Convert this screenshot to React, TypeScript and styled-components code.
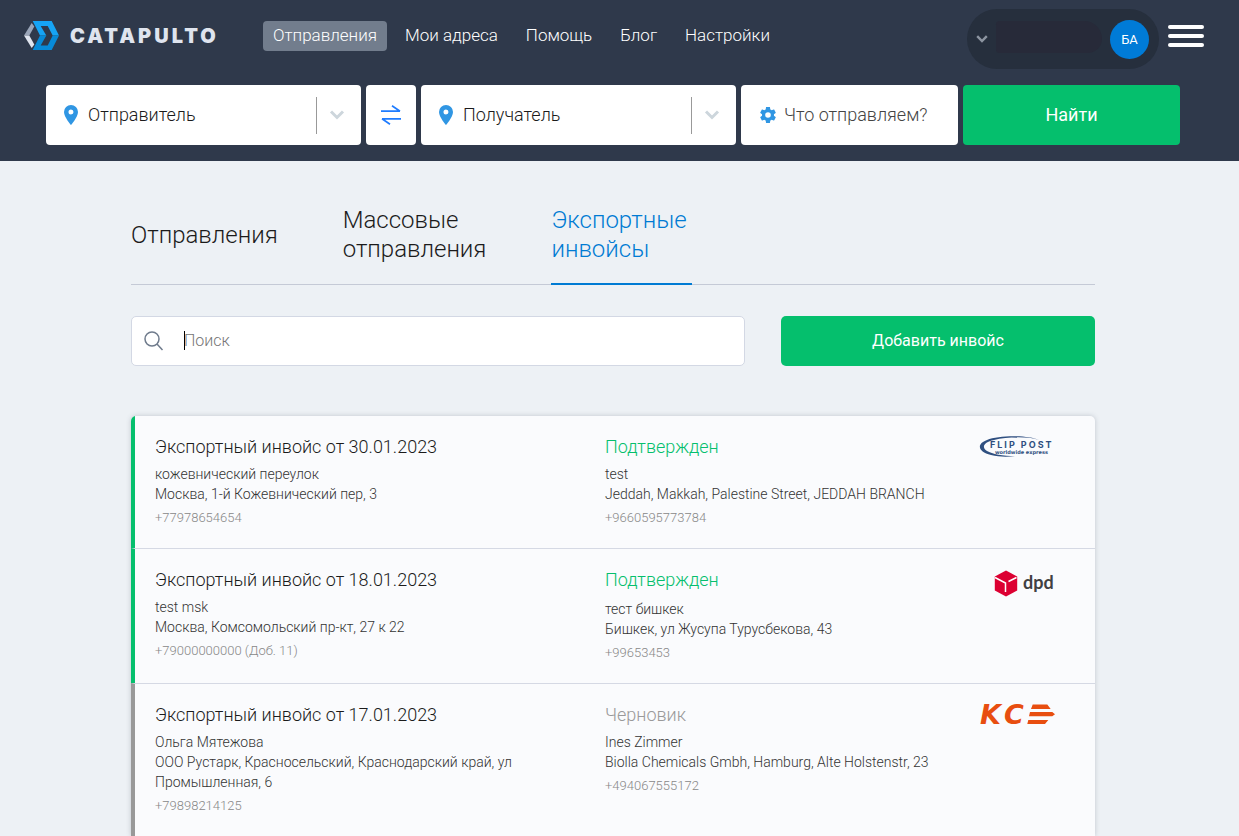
import React from 'react';
import styled, { createGlobalStyle } from 'styled-components';

const GlobalStyle = createGlobalStyle`
  *, *::before, *::after { box-sizing: border-box; }
  body {
    margin: 0;
    background: #edf1f5;
    color: #1b1b1b;
    font-family: Roboto, "Open Sans", sans-serif;
    font-weight: 300;
  }
  button, input { font: inherit; color: inherit; }
  button { border: 0; padding: 0; background: none; cursor: pointer; }
  a { color: inherit; text-decoration: none; }
  h2, p { margin: 0; font-weight: inherit; }
  svg { display: block; flex: none; overflow: visible; }
`;

/* ---------- header ---------- */

const Header = styled.header`
  background: #2f394b;
  padding: 9px 13px 16px 0;
`;

const TopBar = styled.div`
  display: flex;
  align-items: flex-start;
  padding: 0 22px 0 23px;
`;

const Brand = styled.a`
  display: flex;
  align-items: center;
  gap: 10px;
  width: 240px;
  height: 52px;
`;

const BrandName = styled.span`
  padding-top: 2px;
  color: #dfe4ee;
  font: 900 20px/24px Inter, sans-serif;
  letter-spacing: 3px;
`;

const Nav = styled.nav`
  display: flex;
  gap: 8px;
  padding-top: 12px;
  flex: 1;
`;

const NavLink = styled.a<{ $active?: boolean }>`
  padding: 0 10px 2px;
  border-radius: 4px;
  background: ${({ $active }) => ($active ? '#727d8d' : 'transparent')};
  color: #fff;
  font-size: 17px;
  line-height: 28px;
  white-space: nowrap;
`;

const Account = styled.button`
  display: flex;
  align-items: center;
  justify-content: space-between;
  width: 192px;
  height: 60px;
  padding: 0 10px 0 9px;
  border-radius: 30px;
  background: #262f3d;
`;

const AccountName = styled.span`
  width: 106px;
  height: 32px;
  margin-bottom: 4px;
  border-radius: 10px 50px 40px 10px;
  background: #272a39;
`;

const Avatar = styled.span`
  width: 39px;
  height: 39px;
  border-radius: 50%;
  background: #007bd7;
  color: #fff;
  font-size: 13px;
  font-weight: 400;
  line-height: 39px;
  text-align: center;
`;

const MenuButton = styled.button`
  display: flex;
  flex-direction: column;
  gap: 5px;
  width: 36px;
  margin: 16px 0 0 9px;
`;

const MenuLine = styled.span`
  height: 4px;
  border-radius: 2px;
  background: #fff;
`;

const SearchForm = styled.form`
  display: grid;
  grid-template-columns: 315fr 50px 315fr 217fr 217fr;
  gap: 5px;
  max-width: 1134px;
  margin: 16px auto 0;
  font-size: 18px;
`;

const Field = styled.label`
  display: flex;
  align-items: center;
  min-width: 0;
  height: 60px;
  padding: 0 17px 0 18px;
  border-radius: 4px;
  background: #fff;
`;

const FieldInput = styled.input`
  flex: 1;
  min-width: 0;
  margin-left: 10px;
  padding: 0 0 2px;
  border: 0;
  outline: 0;
  background: none;
  &::placeholder { color: #1b1b1b; opacity: 1; }
`;

const Divider = styled.span`
  width: 1px;
  height: 37px;
  margin-right: 13px;
  background: #999;
`;

const SwapButton = styled.button`
  display: grid;
  place-items: center;
  border-radius: 4px;
  background: #fff;
`;

const ParcelButton = styled.button`
  display: flex;
  align-items: center;
  gap: 8px;
  padding-left: 19px;
  border-radius: 4px;
  background: #fff;
  color: #444;
  white-space: nowrap;
`;

const ParcelLabel = styled.span`
  padding-bottom: 2px;
`;

const GreenButton = styled.button<{ $large?: boolean }>`
  height: ${({ $large }) => ($large ? 60 : 50)}px;
  padding-bottom: 2px;
  border-radius: ${({ $large }) => ($large ? 4 : 5)}px;
  background: #05bf6d;
  color: #fff;
  font-size: ${({ $large }) => ($large ? 18 : 16)}px;
  font-weight: 400;
`;

/* ---------- content ---------- */

const Content = styled.main`
  padding-right: 13px;
`;

const Column = styled.div`
  max-width: 964px;
  margin: 0 auto;
`;

const Tabs = styled.nav`
  display: flex;
  align-items: stretch;
  gap: 65px;
  padding-top: 45px;
  box-shadow: inset 0 -1px #c5cad6;
`;

const Tab = styled.a<{ $active?: boolean }>`
  display: flex;
  align-items: center;
  min-width: 141px;
  padding-bottom: 19px;
  border-bottom: 2px solid ${({ $active }) => ($active ? '#007bd3' : 'transparent')};
  color: ${({ $active }) => ($active ? '#007bd3' : 'inherit')};
  font-size: 24px;
  line-height: 29px;
`;

const Toolbar = styled.div`
  display: grid;
  grid-template-columns: 614fr 314fr;
  gap: 36px;
  margin: 31px 0 50px;
`;

const Filter = styled.label`
  display: flex;
  align-items: center;
  height: 50px;
  padding: 0 12px;
  border: 1px solid #d3d8e4;
  border-radius: 5px;
  background: #fff;
  font-size: 16px;
`;

const FilterBox = styled.span`
  position: relative;
  display: flex;
  flex: 1;
  margin-left: 20px;
`;

const FilterInput = styled.input`
  flex: 1;
  min-width: 0;
  padding: 0;
  border: 0;
  outline: 0;
  line-height: 20px;
  &::placeholder { color: #757575; opacity: 1; }
`;

const Caret = styled.span`
  position: absolute;
  top: 0;
  left: 0;
  width: 1px;
  height: 19px;
  background: #000;
`;

const List = styled.section`
  overflow: hidden;
  border-radius: 5px 5px 0 0;
  box-shadow: 0 0 5px rgba(60, 70, 90, 0.25);
  background: #fafbfd;
`;

const Row = styled.article<{ $accent: string }>`
  display: grid;
  grid-template-columns: 1fr 1fr;
  padding: 20px 40px 20px 20px;
  border-left: 4px solid ${({ $accent }) => $accent};
  & + & { border-top: 1px solid #d5d9e4; }
`;

const Party = styled.div`
  max-width: 400px;
`;

const Receiver = styled.div`
  display: flex;
  justify-content: space-between;
  align-items: flex-start;
`;

const Title = styled.h2<{ $color?: string; $gap?: number }>`
  margin-bottom: ${({ $gap = 6 }) => $gap}px;
  color: ${({ $color = '#1b1b1b' }) => $color};
  font-size: 18px;
  line-height: 22px;
`;

const Line = styled.p`
  color: #333;
  font-size: 14px;
  line-height: 20px;
`;

const Phone = styled.p`
  margin-top: 4px;
  color: #888;
  font-size: 13px;
  line-height: 20px;
`;

/* ---------- drawings ---------- */

const BrandMark = () => (
  <svg width="37" height="31" viewBox="0 0 37 31" aria-hidden="true">
    <path d="M8.700 3 11.300 6.500 6.300 15.500H1z" fill="#9aa5b8" />
    <path d="M1 15.500h5.300l5 9-2.600 3.500z" fill="#dfe4ee" />
    <path d="M9.700 1h19L36 15.500h-6.300L24.700 6h-7l5.600 9.500H17z" fill="#16a4f5" />
    <path d="M9.700 30h19L36 15.500h-6.300l-5 10h-7l5.600-10H17z" fill="#078ad8" />
  </svg>
);

const Pin = () => (
  <svg width="14" height="20" viewBox="0 0 14 20" aria-hidden="true">
    <path fillRule="evenodd" fill="#3096e3" d="M7 0a7 7 0 0 1 7 7c0 5-7 13-7 13S0 12 0 7a7 7 0 0 1 7-7zm0 4.500a2.500 2.500 0 1 0 0 5 2.500 2.500 0 0 0 0-5z" />
  </svg>
);

const Chevron = ({ color = '#cdd6dc', size = 14 }: { color?: string; size?: number }) => (
  <svg width={size} height={size - 4} viewBox="0 0 14 10" fill="none" aria-hidden="true">
    <path d="M1 1.500 7 7.500l6-6" stroke={color} strokeWidth="3" />
  </svg>
);

const Swap = () => (
  <svg width="20" height="20" viewBox="0 0 20 20" fill="none" stroke="#1f7cff" strokeWidth="1.700" aria-hidden="true">
    <path d="M0 6.200h19M11 .8l8 5.400M20 13.800H1M9 19.200l-8-5.400" />
  </svg>
);

const Gear = () => (
  <svg width="16" height="16" viewBox="2 2 20 20" aria-hidden="true">
    <path fill="#3096e3" d="M19.430 12.980c.04-.32.070-.64.070-.98s-.03-.66-.07-.98l2.110-1.650c.19-.15.240-.42.120-.64l-2-3.460c-.12-.22-.39-.3-.61-.22l-2.490 1c-.52-.4-1.080-.73-1.690-.98l-.38-2.650C14.460 2.180 14.250 2 14 2h-4c-.25 0-.46.180-.49.420l-.38 2.650c-.61.250-1.170.59-1.690.98l-2.490-1c-.23-.09-.49 0-.61.220l-2 3.460c-.13.220-.07.490.12.640l2.110 1.650c-.04.320-.07.650-.07.980s.03.660.07.980l-2.110 1.650c-.19.150-.24.420-.12.640l2 3.460c.12.220.39.300.61.220l2.490-1c.52.400 1.080.730 1.690.980l.38 2.650c.03.240.24.420.49.420h4c.25 0 .46-.18.490-.42l.38-2.650c.61-.25 1.170-.59 1.690-.98l2.490 1c.23.090.490 0 .610-.22l2-3.460c.12-.22.070-.49-.12-.64l-2.110-1.650zM12 15.500a3.500 3.500 0 1 1 0-7 3.500 3.500 0 0 1 0 7z" />
  </svg>
);

const Magnifier = () => (
  <svg width="20" height="20" viewBox="0 0 20 20" fill="none" stroke="#6f7b8c" strokeWidth="1.500" aria-hidden="true">
    <circle cx="8" cy="8" r="7" />
    <path d="m13 13 5.500 6" />
  </svg>
);

const FlipPost = () => (
  <svg width="76" height="22" viewBox="0 0 76 22" role="img" aria-label="Flip Post">
    <path d="M60 4C49-1 20-1 8 4-3 8-1 16 12 19c8 2 17 2 24 1-12 0-23-2-28-5C2 11 5 6 15 4 28 1 48 0 60 4z" fill="#2f4f80" />
    <text x="11" y="12" fill="#2f4f80" fontFamily="Inter" fontWeight="700" fontSize="9" letterSpacing="2">FLIP POST</text>
    <text x="16" y="18" fill="#2f4f80" fontFamily="DejaVu Sans" fontWeight="700" fontSize="5">worldwide express</text>
  </svg>
);

const Dpd = () => (
  <svg width="61" height="28" viewBox="0 0 61 28" role="img" aria-label="dpd">
    <path d="m12 1.500 11.200 6v14L12 27.500.8 21.500v-14z" fill="#dc0032" />
    <path d="m1 8.500 10.500 5.500v9M14.500 12.500l8-4" fill="none" stroke="#fff" strokeWidth="1.500" />
    <text x="29" y="20" fill="#414042" fontFamily="Lato" fontWeight="700" fontSize="18">dpd</text>
  </svg>
);

const Kce = () => (
  <svg width="76" height="22" viewBox="0 0 76 22" role="img" aria-label="KCE">
    <text x="1 25" y="20" fill="#e84e10" fontFamily="DejaVu Sans" fontWeight="700" fontStyle="italic" fontSize="27">KC</text>
    <path d="M53.700.5h14.600l3.400 4.500H52zM51 8h22.300l2.700 2.300-2.700 2H50zM49.300 16h20L66 20H48.300z" fill="#e84e10" />
  </svg>
);

/* ---------- data ---------- */

const GREEN = '#05bf6d';
const GREY = '#999';

const invoices = [
  {
    date: '30.01.2023',
    from: ['кожевнический переулок', 'Москва, 1-й Кожевнический пер, 3', '+77978654654'],
    status: 'Подтвержден',
    color: GREEN,
    gap: 6,
    to: ['test', 'Jeddah, Makkah, Palestine Street, JEDDAH BRANCH', '+9660595773784'],
    Logo: FlipPost,
  },
  {
    date: '18.01.2023',
    from: ['test msk', 'Москва, Комсомольский пр-кт, 27 к 22', '+79000000000 (Доб. 11)'],
    status: 'Подтвержден',
    color: GREEN,
    gap: 8,
    to: ['тест бишкек', 'Бишкек, ул Жусупа Турусбекова, 43', '+99653453'],
    Logo: Dpd,
  },
  {
    date: '17.01.2023',
    from: ['Ольга Мятежова', 'ООО Рустарк, Красносельский, Краснодарский край, ул Промышленная, 6', '+79898214125'],
    status: 'Черновик',
    color: GREY,
    gap: 6,
    to: ['Ines Zimmer', 'Biolla Chemicals Gmbh, Hamburg, Alte Holstenstr, 23', '+494067555172'],
    Logo: Kce,
  },
];

const PlaceField = ({ label }: { label: string }) => (
  <Field>
    <Pin />
    <FieldInput type="text" placeholder={label} aria-label={label} />
    <Divider />
    <Chevron />
  </Field>
);

export default function App() {
  return (
    <>
      <GlobalStyle />
      <Header>
        <TopBar>
          <Brand href="#">
            <BrandMark />
            <BrandName>CATAPULTO</BrandName>
          </Brand>
          <Nav>
            <NavLink href="#" $active>Отправления</NavLink>
            <NavLink href="#">Мои адреса</NavLink>
            <NavLink href="#">Помощь</NavLink>
            <NavLink href="#">Блог</NavLink>
            <NavLink href="#">Настройки</NavLink>
          </Nav>
          <Account type="button">
            <Chevron color="#8d95a1" size={12} />
            <AccountName />
            <Avatar>БА</Avatar>
          </Account>
          <MenuButton type="button" aria-label="Меню">
            <MenuLine />
            <MenuLine />
            <MenuLine />
          </MenuButton>
        </TopBar>
        <SearchForm onSubmit={(e) => e.preventDefault()}>
          <PlaceField label="Отправитель" />
          <SwapButton type="button" aria-label="Поменять местами"><Swap /></SwapButton>
          <PlaceField label="Получатель" />
          <ParcelButton type="button"><Gear /><ParcelLabel>Что отправляем?</ParcelLabel></ParcelButton>
          <GreenButton type="submit" $large>Найти</GreenButton>
        </SearchForm>
      </Header>
      <Content>
        <Column>
          <Tabs>
            <Tab href="#">Отправления</Tab>
            <Tab href="#">Массовые<br />отправления</Tab>
            <Tab href="#" $active>Экспортные<br />инвойсы</Tab>
          </Tabs>
          <Toolbar>
            <Filter>
              <Magnifier />
              <FilterBox>
                <FilterInput type="text" placeholder="Поиск" aria-label="Поиск" />
                <Caret />
              </FilterBox>
            </Filter>
            <GreenButton type="button">Добавить инвойс</GreenButton>
          </Toolbar>
          <List>
            {invoices.map(({ date, from, status, color, gap, to, Logo }) => (
              <Row key={date} $accent={color}>
                <Party>
                  <Title>Экспортный инвойс от {date}</Title>
                  <Line>{from[0]}</Line>
                  <Line>{from[1]}</Line>
                  <Phone>{from[2]}</Phone>
                </Party>
                <Receiver>
                  <Party>
                    <Title $color={color} $gap={gap}>{status}</Title>
                    <Line>{to[0]}</Line>
                    <Line>{to[1]}</Line>
                    <Phone>{to[2]}</Phone>
                  </Party>
                  <Logo />
                </Receiver>
              </Row>
            ))}
          </List>
        </Column>
      </Content>
    </>
  );
}
